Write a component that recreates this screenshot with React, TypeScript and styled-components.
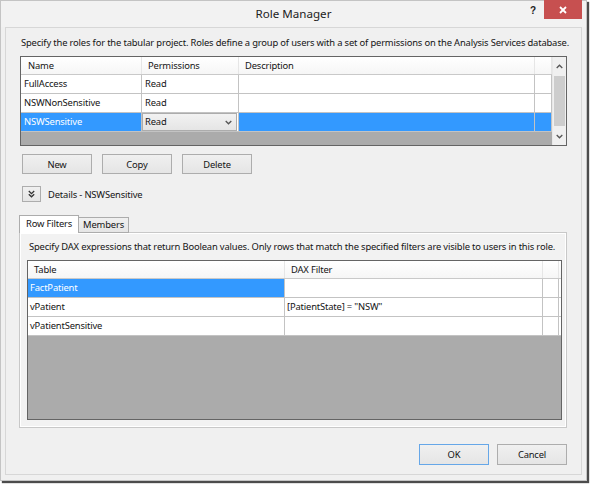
import React from "react";
import styled, { createGlobalStyle, css } from "styled-components";

const Global = createGlobalStyle`
  html, body { margin: 0; padding: 0; background: #ffffff; }
  body {
    font-family: "Segoe UI", "Noto Sans", "Open Sans", sans-serif;
    font-size: 9.4px;
    letter-spacing: -0.16px;
    color: #141414;
  }
  * { box-sizing: border-box; }
`;

const Page = styled.div`
  width: 590px;
  height: 484px;
  background: #ffffff;
`;

const Window = styled.div`
  width: 587px;
  height: 481px;
  background: #f0f0f0;
  border: 1px solid #c4c4c4;
  box-shadow: 2px 2px 1px rgba(0, 0, 0, 0.7);
  display: flex;
  flex-direction: column;
`;

const TitleBar = styled.div`
  height: 26px;
  display: grid;
  grid-template-columns: 1fr auto 1fr;
  align-items: start;
  background: #f2f2f2;
`;

const Title = styled.div`
  grid-column: 2;
  font-size: 11.6px;
  letter-spacing: 0;
  line-height: 26px;
  color: #222;
`;

const Controls = styled.div`
  grid-column: 3;
  justify-self: end;
  display: flex;
  align-items: flex-start;
  margin-right: 4px;
`;

const HelpGlyph = styled.span`
  font-family: "Liberation Sans", Arial, sans-serif;
  font-weight: bold;
  font-size: 10px;
  line-height: 19px;
  color: #222;
  margin-right: 8px;
`;

const CloseButton = styled.div`
  width: 38px;
  height: 19px;
  margin-top: -1px;
  background: #c75050;
  display: flex;
  align-items: center;
  justify-content: center;
`;

const Frame = styled.div`
  flex: 1;
  margin: 0 4px 5px 4px;
  border: 1px solid #d7d7d7;
  padding: 8px 14px 9px 14px;
  display: flex;
  flex-direction: column;
`;

const Text = styled.div<{ $indent?: number }>`
  line-height: 14px;
  height: 14px;
  white-space: nowrap;
  padding-left: ${(p) => p.$indent ?? 0}px;
`;

const GridBox = styled.div<{ $height: number; $mt: number }>`
  height: ${(p) => p.$height}px;
  margin-top: ${(p) => p.$mt}px;
  border: 1px solid #646464;
  display: flex;
  background: #ababab;
`;

const GridBody = styled.div`
  flex: 1;
  display: flex;
  flex-direction: column;
`;

const Row = styled.div<{ $cols: string; $header?: boolean }>`
  display: grid;
  grid-template-columns: ${(p) => p.$cols};
  height: ${(p) => (p.$header ? 18 : 19)}px;
  background: ${(p) => (p.$header ? "linear-gradient(#ffffff, #f6f6f6)" : "#ffffff")};
  border-bottom: 1px solid ${(p) => (p.$header ? "#c9c9c9" : "#c3c3c3")};
`;

const Cell = styled.div<{ $sel?: boolean; $header?: boolean; $pad?: number }>`
  border-right: 1px solid ${(p) => (p.$header ? "#e6e6e6" : "#c3c3c3")};
  padding-left: ${(p) => p.$pad ?? 3}px;
  line-height: 18px;
  white-space: nowrap;
  overflow: hidden;
  display: flex;
  align-items: center;
  ${(p) =>
    p.$sel &&
    css`
      background: #3399ff;
      color: #ffffff;
    `}
`;

const Combo = styled.div`
  flex: 1;
  align-self: stretch;
  margin: 0 1px 0 0;
  border: 1px solid #acacac;
  background: linear-gradient(#f2f2f2, #e5e5e5);
  color: #141414;
  display: flex;
  align-items: center;
  justify-content: space-between;
  padding: 0 4px 0 2px;
`;

const Scrollbar = styled.div`
  width: 14px;
  background: #f0f0f0;
  border-left: 1px solid #e8e8e8;
  display: flex;
  flex-direction: column;
  align-items: center;
`;

const ScrollArrow = styled.div`
  height: 18px;
  display: flex;
  align-items: center;
  justify-content: center;
`;

const Thumb = styled.div`
  flex: 1;
  width: 11px;
  background: #cdcdcd;
  margin: 1px 0;
`;

const ButtonRow = styled.div<{ $mt: number; $end?: boolean }>`
  display: flex;
  gap: ${(p) => (p.$end ? 8 : 10)}px;
  margin-top: ${(p) => p.$mt}px;
  padding-left: ${(p) => (p.$end ? 0 : 2)}px;
  justify-content: ${(p) => (p.$end ? "flex-end" : "flex-start")};
`;

const Button = styled.div<{ $default?: boolean; $h?: number }>`
  width: 70px;
  height: ${(p) => p.$h ?? 20}px;
  border: 1px solid ${(p) => (p.$default ? "#66a7e8" : "#adadad")};
  background: linear-gradient(#f0f0f0, #e5e5e5);
  display: flex;
  align-items: center;
  justify-content: center;
  color: #141414;
`;

const DetailsRow = styled.div`
  display: flex;
  align-items: center;
  gap: 7px;
  margin-top: 12px;
  padding-left: 2px;
`;

const Toggle = styled.div`
  width: 19px;
  height: 16px;
  border: 1px solid #adadad;
  background: linear-gradient(#f0f0f0, #e5e5e5);
  display: flex;
  align-items: center;
  justify-content: center;
`;

const TabStrip = styled.div`
  display: flex;
  align-items: flex-end;
  margin-top: 13px;
  margin-left: -1px;
  margin-bottom: -1px;
  height: 18px;
  position: relative;
  z-index: 1;
`;

const Tab = styled.div<{ $active?: boolean }>`
  height: ${(p) => (p.$active ? 18 : 16)}px;
  padding: 0 ${(p) => (p.$active ? 6 : 4)}px;
  border: 1px solid #acacac;
  border-bottom: ${(p) => (p.$active ? "none" : "1px solid #acacac")};
  ${(p) => !p.$active && "border-left: none;"}
  background: ${(p) => (p.$active ? "#ffffff" : "linear-gradient(#f0f0f0, #e5e5e5)")};
  line-height: ${(p) => (p.$active ? 15 : 14)}px;
  white-space: nowrap;
`;

const Panel = styled.div`
  flex: 1;
  margin-left: -1px;
  border: 1px solid #c8c8c8;
  box-shadow: inset 0 0 0 1px #ffffff;
  background: #f2f2f2;
  padding: 7px 4px 4px 7px;
  display: flex;
  flex-direction: column;
`;

const Chevron = ({ up }: { up?: boolean }) => (
  <svg width="7" height="5" viewBox="0 0 7 5">
    <polyline
      points={up ? "0.7,4 3.5,1.2 6.3,4" : "0.7,1 3.5,3.8 6.3,1"}
      fill="none"
      stroke="#555"
      strokeWidth="1.3"
    />
  </svg>
);

const DoubleChevron = () => (
  <svg width="7" height="8" viewBox="0 0 7 8">
    <polyline points="0.8,1 3.5,3.6 6.2,1" fill="none" stroke="#333" strokeWidth="1.3" />
    <polyline points="0.8,4.2 3.5,6.8 6.2,4.2" fill="none" stroke="#333" strokeWidth="1.3" />
  </svg>
);

const CloseX = () => (
  <svg width="8" height="8" viewBox="0 0 8 8">
    <line x1="1" y1="1" x2="7" y2="7" stroke="#fff" strokeWidth="1.8" />
    <line x1="7" y1="1" x2="1" y2="7" stroke="#fff" strokeWidth="1.8" />
  </svg>
);

const roleCols = "121px 97px 296px 17px";
const filterCols = "257px 258px 16px";

type Role = { name: string; perm: string; selected?: boolean };
const roles: Role[] = [
  { name: "FullAccess", perm: "Read" },
  { name: "NSWNonSensitive", perm: "Read" },
  { name: "NSWSensitive", perm: "Read", selected: true },
];

type Filter = { table: string; dax: string; selected?: boolean };
const filters: Filter[] = [
  { table: "FactPatient", dax: "", selected: true },
  { table: "vPatient", dax: '[PatientState] = "NSW"' },
  { table: "vPatientSensitive", dax: "" },
];

export default function App() {
  return (
    <Page>
      <Global />
      <Window>
        <TitleBar>
          <Title>Role Manager</Title>
          <Controls>
            <HelpGlyph>?</HelpGlyph>
            <CloseButton>
              <CloseX />
            </CloseButton>
          </Controls>
        </TitleBar>
        <Frame>
          <Text $indent={1}>
            Specify the roles for the tabular project. Roles define a group of users with a set of
            permissions on the Analysis Services database.
          </Text>
          <GridBox $height={90} $mt={6}>
            <GridBody>
              <Row $cols={roleCols} $header>
                <Cell $header $pad={7}>Name</Cell>
                <Cell $header $pad={6}>Permissions</Cell>
                <Cell $header $pad={6}>Description</Cell>
                <Cell $header />
              </Row>
              {roles.map((r) => (
                <Row key={r.name} $cols={roleCols}>
                  <Cell $sel={r.selected}>{r.name}</Cell>
                  {r.selected ? (
                    <Cell $pad={0}>
                      <Combo>
                        <span>{r.perm}</span>
                        <Chevron />
                      </Combo>
                    </Cell>
                  ) : (
                    <Cell>{r.perm}</Cell>
                  )}
                  <Cell $sel={r.selected} />
                  <Cell $sel={r.selected} />
                </Row>
              ))}
            </GridBody>
            <Scrollbar>
              <ScrollArrow>
                <Chevron up />
              </ScrollArrow>
              <Thumb />
              <ScrollArrow>
                <Chevron />
              </ScrollArrow>
            </Scrollbar>
          </GridBox>
          <ButtonRow $mt={8}>
            <Button>New</Button>
            <Button>Copy</Button>
            <Button>Delete</Button>
          </ButtonRow>
          <DetailsRow>
            <Toggle>
              <DoubleChevron />
            </Toggle>
            <span>Details - NSWSensitive</span>
          </DetailsRow>
          <TabStrip>
            <Tab $active>Row Filters</Tab>
            <Tab>Members</Tab>
          </TabStrip>
          <Panel>
            <Text $indent={2}>
              Specify DAX expressions that return Boolean values. Only rows that match the specified
              filters are visible to users in this role.
            </Text>
            <GridBox $height={160} $mt={6}>
              <GridBody>
                <Row $cols={filterCols} $header>
                  <Cell $header $pad={6}>Table</Cell>
                  <Cell $header $pad={6}>DAX Filter</Cell>
                  <Cell $header />
                </Row>
                {filters.map((f) => (
                  <Row key={f.table} $cols={filterCols}>
                    <Cell $sel={f.selected} $pad={2}>{f.table}</Cell>
                    <Cell $pad={2}>{f.dax}</Cell>
                    <Cell />
                  </Row>
                ))}
              </GridBody>
            </GridBox>
          </Panel>
          <ButtonRow $mt={16} $end>
            <Button $default $h={21}>OK</Button>
            <Button $h={21}>Cancel</Button>
          </ButtonRow>
        </Frame>
      </Window>
    </Page>
  );
}
